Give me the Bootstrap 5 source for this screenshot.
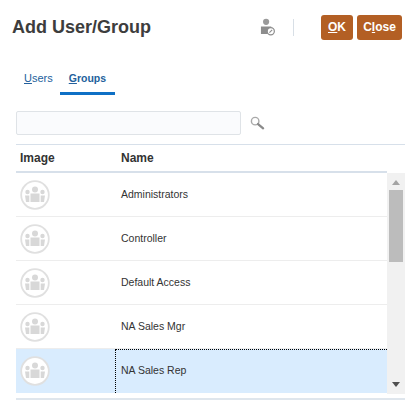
<!DOCTYPE html>
<html lang="en"><head><meta charset="utf-8"><title>Add User/Group</title>
<link rel="stylesheet" href="https://cdn.jsdelivr.net/npm/bootstrap@5.3.0/dist/css/bootstrap.min.css">
<style>
html,body{height:100%;overflow:hidden}
body{font-family:"Liberation Sans",Arial,sans-serif;background:#fff;color:#333}
.dlg-head{height:55px;padding:15px 11px 0 12px}
.dlg-title{font-size:18px;font-weight:700;color:#3d3d3d;line-height:25px;margin:0}
.help-ico{width:15px;height:18px;margin:3px 0 0 0}
.vsep{width:1px;height:17px;background:#d8dfe6;margin:4px 27px 0 18px}
.act-btn{height:25px;background:#b35f24;color:#fff;font-size:12px;font-weight:700;border:0;border-radius:3px;padding:0;line-height:25px;text-align:center}
.act-ok{width:32px;margin-right:4px}
.act-close{width:45px}
.tabbar{height:39px;padding-left:16px;margin-bottom:17px}
.tabitem{font-size:11px;color:#235f9c;padding:0 7px 0 8px;height:40px;line-height:46px;box-sizing:border-box}
.tabitem.on{font-weight:700;font-size:10.5px;border-bottom:3px solid #0e70c5;width:55px;margin-left:0;padding:0 9px}
.search-row{padding-left:16px;height:33px}
.search-box{width:225px;height:24px;background:#fafbfd;border:1px solid #dfe3e7;border-radius:2px}
.search-ico{width:15px;height:15px;margin:5px 0 0 9px}
.tbl-wrap{margin:0 8px 0 16px;border-top:1px solid #d7e0ea;border-bottom:2px solid #dfe6ed;width:389px}
.tbl-head{height:28px;display:flex;align-items:center;font-size:12px;font-weight:700;color:#333;border-bottom:2px solid #d7e0ea;margin-right:18px}
.col-img{width:100px;padding-left:4px;flex:none}
.col-nm{flex:1;padding-left:5px}
.tbl-body{display:flex;height:225px}
.rows{width:371px;flex:none}
.urow{height:44px;display:flex;align-items:center;font-size:10.5px;color:#333;border-bottom:1px solid #ededed}
.urow:last-child{border-bottom:0;background:#d9ecfe}
.urow:last-child .col-img{width:99px}
.urow:last-child .col-nm{height:44px;display:flex;align-items:center;border-left:1px dotted #000;border-top:1px dotted #000;padding-left:5px;padding-bottom:2px}
.urow .col-img{padding-left:4px}
.avatar{width:30px;height:30px;display:block}
.sbar{width:18px;background:#f1f1f1;position:relative;height:221px}
.sthumb{position:absolute;left:2px;right:2px;top:17px;height:72px;background:#bcbcbc}
.sup,.sdn{position:absolute;left:5px;width:0;height:0;border-left:4px solid transparent;border-right:4px solid transparent}
.sup{top:7px;border-bottom:5px solid #a3a3a3}
.sdn{bottom:7px;border-top:5px solid #505050}
u{text-underline-offset:1px}
</style></head><body>
<div class="dlg-head d-flex">
 <h1 class="dlg-title flex-grow-1">Add User/Group</h1>
 <svg class="help-ico" viewBox="0 0 16 19"><circle cx="6.500" cy="4" r="3.300" fill="#9a9a9a"/><path d="M1 9h11v2.500a5 5 0 0 0-3 5.500H1z" fill="#8d8d8d"/><circle cx="11.500" cy="14" r="3.800" fill="#fff" stroke="#8d8d8d" stroke-width="1.300"/><path d="M10 15.500l3-3" fill="none" stroke="#8d8d8d" stroke-width="1.200"/></svg>
 <div class="vsep"></div>
 <button class="act-btn act-ok"><u>O</u>K</button>
 <button class="act-btn act-close">C<u>l</u>ose</button>
</div>
<div class="tabbar d-flex">
 <div class="tabitem"><u>U</u>sers</div>
 <div class="tabitem on"><u>G</u>roups</div>
</div>
<div class="search-row d-flex">
 <div class="search-box"></div>
 <svg class="search-ico" viewBox="0 0 16 16"><circle cx="5.500" cy="5.500" r="4" fill="none" stroke="#a9a9a9" stroke-width="1.500"/><path d="M8.600 8.600l5.400 4.600" stroke="#8a8a8a" stroke-width="2.400" stroke-linecap="round"/></svg>
</div>
<svg width="0" height="0" class="d-block"><defs><symbol id="grp" viewBox="0 0 30 30"><circle cx="15" cy="15" r="13.800" fill="#fff" stroke="#e0e0e0" stroke-width="1.800"/><g fill="#d8d8d8"><circle cx="15" cy="9.500" r="3"/><circle cx="7.500" cy="12" r="2.200"/><circle cx="22.500" cy="12" r="2.200"/><path d="M10.500 13.500h9v8.500h-9zM5 15.500h4.300V22H6zM20.700 15.500H25L24 22h-3.300z"/></g></symbol></defs></svg>
<div class="tbl-wrap">
 <div class="tbl-head"><div class="col-img">Image</div><div class="col-nm">Name</div></div>
 <div class="tbl-body">
  <div class="rows">
   <div class="urow"><div class="col-img"><svg class="avatar"><use href="#grp"/></svg></div><div class="col-nm">Administrators</div></div>
   <div class="urow"><div class="col-img"><svg class="avatar"><use href="#grp"/></svg></div><div class="col-nm">Controller</div></div>
   <div class="urow"><div class="col-img"><svg class="avatar"><use href="#grp"/></svg></div><div class="col-nm">Default Access</div></div>
   <div class="urow"><div class="col-img"><svg class="avatar"><use href="#grp"/></svg></div><div class="col-nm">NA Sales Mgr</div></div>
   <div class="urow"><div class="col-img"><svg class="avatar"><use href="#grp"/></svg></div><div class="col-nm">NA Sales Rep</div></div>
  </div>
  <div class="sbar"><div class="sup"></div><div class="sthumb"></div><div class="sdn"></div></div>
 </div>
</div>
<script src="https://cdn.jsdelivr.net/npm/bootstrap@5.3.0/dist/js/bootstrap.bundle.min.js"></script>
</body></html>
